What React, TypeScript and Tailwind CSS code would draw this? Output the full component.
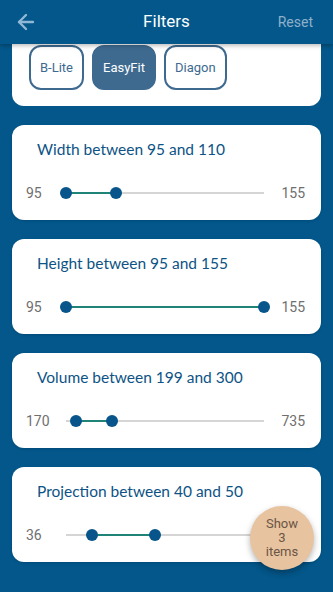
import React from 'react';
import { ArrowLeft } from 'lucide-react';

type RangeFilter = {
  label: string;
  min: number;
  max: number;
  from: number;
  to: number;
  hideMax?: boolean;
};

const filters: RangeFilter[] = [
  { label: 'Width', min: 95, max: 155, from: 95, to: 110 },
  { label: 'Height', min: 95, max: 155, from: 95, to: 155 },
  { label: 'Volume', min: 170, max: 735, from: 199, to: 300 },
  // max label sits under the floating button
  { label: 'Projection', min: 36, max: 67, from: 40, to: 50, hideMax: true },
];

const brands = ['B-Lite', 'EasyFit', 'Diagon'];

const RangeCard: React.FC<{ f: RangeFilter }> = ({ f }) => {
  const a = ((f.from - f.min) / (f.max - f.min)) * 100;
  const b = ((f.to - f.min) / (f.max - f.min)) * 100;
  return (
    <div className="bg-white rounded-[12px] h-[95px] pt-[12px] shadow-sm">
      <h2 className="pl-[25px] h-[24px] leading-[24px] text-[15.5px] text-[#0d5385] font-['Lato',sans-serif]">
        {f.label} between {f.from} and {f.to}
      </h2>
      <div className="flex items-center h-[20px] mt-[22px] pl-[14px] pr-[16px] font-['Roboto',sans-serif] text-[14px] text-[#6f6f6f]">
        <span className="w-[40px]">{f.min}</span>
        <div className="relative flex-1 h-[20px]">
          <div className="absolute left-0 right-0 top-[9px] h-[2px] bg-[#d5d5d5]" />
          <div
            className="absolute top-[9px] h-[2px] bg-[#1f8378]"
            style={{ left: `${a}%`, width: `${b - a}%` }}
          />
          <div
            className="absolute top-[4px] w-[12px] h-[12px] -ml-[6px] rounded-full bg-[#07558a]"
            style={{ left: `${a}%` }}
          />
          <div
            className="absolute top-[4px] w-[12px] h-[12px] -ml-[6px] rounded-full bg-[#07558a]"
            style={{ left: `${b}%` }}
          />
        </div>
        <span className={`w-[41px] text-right ${f.hideMax ? 'invisible' : ''}`}>{f.max}</span>
      </div>
    </div>
  );
};

const App: React.FC = () => {
  return (
    <div className="relative w-[333px] h-[592px] overflow-hidden bg-[#03578a] flex flex-col">
      {/* top bar */}
      <div className="relative z-10 h-[44px] shrink-0 flex items-center justify-between px-[14px] bg-[#03578a] shadow-[0_2px_4px_rgba(0,0,0,0.25)]">
        <ArrowLeft className="w-[24px] h-[24px] text-[#8fb7d6]" strokeWidth={2.4} />
        <span className="absolute left-0 right-0 text-center text-[17px] text-white font-['Roboto',sans-serif] pointer-events-none">
          Filters
        </span>
        <span className="text-[14px] text-[#8eb0ca] font-['Roboto',sans-serif] pr-[6px]">Reset</span>
      </div>

      {/* scrolled content */}
      <div className="flex-1 overflow-hidden px-[12px]">
        <div className="flex flex-col gap-[19px] -mt-[15px]">
          <div className="bg-white rounded-[12px] pt-[16px] pb-[16px] pl-[17px] flex gap-[8px]">
            {brands.map((b) => (
              <div
                key={b}
                className={`h-[45px] px-[9px] flex items-center rounded-[12px] border-2 border-[#3e6a90] text-[13px] font-['Roboto',sans-serif] ${
                  b === 'EasyFit' ? 'bg-[#3e6a90] text-white' : 'bg-white text-[#3e6a90]'
                }`}
              >
                {b}
              </div>
            ))}
          </div>
          {filters.map((f) => (
            <RangeCard key={f.label} f={f} />
          ))}
        </div>
      </div>

      {/* show results */}
      <button className="absolute left-[250px] top-[506px] w-[64px] h-[64px] rounded-full bg-[#e8c39f] shadow-[0_3px_6px_rgba(0,0,0,0.3)] flex flex-col items-center justify-center text-[13px] leading-[14px] text-[#6a5546] font-['Roboto',sans-serif]">
        <span>Show</span>
        <span>3</span>
        <span>items</span>
      </button>
    </div>
  );
};

export default App;
